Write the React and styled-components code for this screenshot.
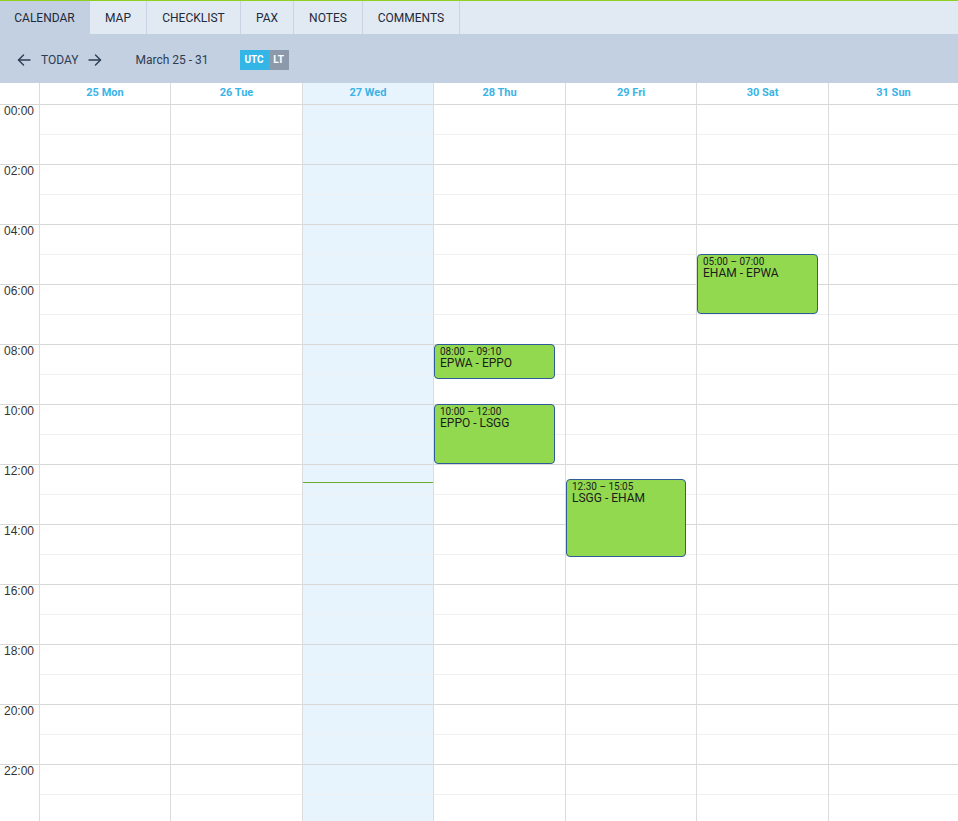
import React from "react";
import styled, { createGlobalStyle } from "styled-components";

const GlobalStyle = createGlobalStyle`
  html, body { margin: 0; padding: 0; background: #fff; }
  body { font-family: Roboto, "Liberation Sans", Arial, sans-serif; }
  * { box-sizing: border-box; }
`;

const HOUR = 30;

const Page = styled.div`
  width: 958px;
  height: 821px;
  overflow: hidden;
  border-top: 1px solid #8fcf1d;
`;

const TabBar = styled.nav`
  display: flex;
  height: 33px;
  background: #e1e9f3;
`;

const Tab = styled.div`
  display: flex;
  align-items: center;
  justify-content: center;
  width: ${(p) => p.$w}px;
  font-size: 12px;
  color: #1f2a3a;
  background: ${(p) => (p.$active ? "#c3d0e1" : "transparent")};
  border-right: 1px solid ${(p) => (p.$active ? "transparent" : "#c9d4e2")};
`;

const Toolbar = styled.div`
  display: flex;
  align-items: center;
  height: 49px;
  padding: 2px 0 0 17px;
  background: #c3d0e1;
  color: #2c3c52;
  font-size: 12px;
`;

const NavButton = styled.span`
  display: inline-flex;
  align-items: center;
  margin-right: ${(p) => p.$mr || 0}px;
`;

const RangeLabel = styled.span`
  margin-left: 34px;
  margin-right: 31px;
  font-size: 12px;
  color: #2c3c52;
`;

const Toggle = styled.div`
  display: flex;
  height: 20px;
`;

const ToggleOption = styled.span`
  display: flex;
  align-items: center;
  justify-content: center;
  width: ${(p) => p.$w}px;
  font-size: 10px;
  font-weight: 700;
  color: #fff;
  background: ${(p) => (p.$on ? "#33b6e6" : "#8b99ab")};
`;

/* week grid: time gutter plus seven day columns */
const Grid = styled.div`
  display: grid;
  grid-template-columns: 39px 131px 132px 131px 132px 131px 132px 1fr;
`;

const HeaderCell = styled.div`
  height: 22px;
  border-bottom: 1px solid #d8d8d8;
  border-left: ${(p) => (p.$gutter ? "none" : "1px solid #dcdcdc")};
  background: ${(p) => (p.$today ? "#e8f4fd" : "#fff")};
  display: flex;
  align-items: center;
  justify-content: center;
  font-size: 11px;
  font-weight: 700;
  color: #3ab3e6;
  padding-bottom: 2px;
`;

const Gutter = styled.div`
  display: flex;
  flex-direction: column;
`;

const GutterBlock = styled.div`
  height: ${HOUR * 2}px;
  border-bottom: 1px solid #d8d8d8;
  text-align: right;
  padding-right: 5px;
  font-size: 12px;
  line-height: 12px;
  color: #333;
  font-family: "Liberation Sans", Arial, sans-serif;
`;

const DayColumn = styled.div`
  position: relative;
  border-left: 1px solid #dcdcdc;
  background: ${(p) => (p.$today ? "#e8f4fd" : "#fff")};
`;

const Slot = styled.div`
  height: ${HOUR}px;
  border-bottom: 1px solid ${(p) => (p.$major ? "#d8d8d8" : "#f0f0f0")};
`;

const Event = styled.div`
  position: absolute;
  left: 0;
  right: 10px;
  background: #92d94f;
  border: 1px solid #2f5b98;
  border-radius: 4px;
  padding: 2px 5px;
  color: #1c1c1c;
  overflow: hidden;
`;

const EventTime = styled.div`
  font-size: 10px;
  line-height: 10px;
`;

const EventTitle = styled.div`
  font-size: 12px;
  line-height: 12px;
`;

const NowLine = styled.div`
  position: absolute;
  left: 0;
  right: 0;
  height: 1px;
  background: #6aae28;
`;

const Arrow = ({ dir }) => (
  <svg width="14" height="12" viewBox="0 0 14 12" fill="none" stroke="#2c3c52" strokeWidth="1.4" strokeLinecap="round" strokeLinejoin="round">
    {dir === "left" ? (
      <>
        <path d="M13 6H1.5" />
        <path d="M6.5 1L1.5 6l5 5" />
      </>
    ) : (
      <>
        <path d="M1 6h11.5" />
        <path d="M7.5 1l5 5-5 5" />
      </>
    )}
  </svg>
);

const tabs = [
  { label: "CALENDAR", w: 90, active: true },
  { label: "MAP", w: 57 },
  { label: "CHECKLIST", w: 94 },
  { label: "PAX", w: 53 },
  { label: "NOTES", w: 69 },
  { label: "COMMENTS", w: 97 },
];

const days = ["25 Mon", "26 Tue", "27 Wed", "28 Thu", "29 Fri", "30 Sat", "31 Sun"];
const TODAY = 2;

const events = [
  { day: 5, start: 5, end: 7, time: "05:00 – 07:00", title: "EHAM - EPWA" },
  { day: 3, start: 8, end: 9 + 10 / 60, time: "08:00 – 09:10", title: "EPWA - EPPO" },
  { day: 3, start: 10, end: 12, time: "10:00 – 12:00", title: "EPPO - LSGG" },
  { day: 4, start: 12.5, end: 15 + 5 / 60, time: "12:30 – 15:05", title: "LSGG - EHAM" },
];

const NOW = 12.6;

export default function App() {
  return (
    <Page>
      <GlobalStyle />
      <TabBar>
        {tabs.map((t) => (
          <Tab key={t.label} $w={t.w} $active={t.active}>
            {t.label}
          </Tab>
        ))}
      </TabBar>
      <Toolbar>
        <NavButton $mr={10}>
          <Arrow dir="left" />
        </NavButton>
        <NavButton $mr={9}>TODAY</NavButton>
        <NavButton>
          <Arrow dir="right" />
        </NavButton>
        <RangeLabel>March 25 - 31</RangeLabel>
        <Toggle>
          <ToggleOption $w={29} $on>UTC</ToggleOption>
          <ToggleOption $w={20}>LT</ToggleOption>
        </Toggle>
      </Toolbar>
      <Grid>
        <HeaderCell $gutter />
        {days.map((d, i) => (
          <HeaderCell key={d} $today={i === TODAY}>
            {d}
          </HeaderCell>
        ))}
        <Gutter>
          {Array.from({ length: 12 }, (_, i) => (
            <GutterBlock key={i}>{String(i * 2).padStart(2, "0")}:00</GutterBlock>
          ))}
        </Gutter>
        {days.map((d, i) => (
          <DayColumn key={d} $today={i === TODAY}>
            {Array.from({ length: 24 }, (_, h) => (
              <Slot key={h} $major={h % 2 === 1} />
            ))}
            {events
              .filter((e) => e.day === i)
              .map((e) => (
                <Event
                  key={e.title}
                  style={{
                    top: e.start * HOUR - 1,
                    height: (e.end - e.start) * HOUR,
                  }}
                >
                  <EventTime>{e.time}</EventTime>
                  <EventTitle>{e.title}</EventTitle>
                </Event>
              ))}
            {i === TODAY && <NowLine style={{ top: NOW * HOUR - 1 }} />}
          </DayColumn>
        ))}
      </Grid>
    </Page>
  );
}
